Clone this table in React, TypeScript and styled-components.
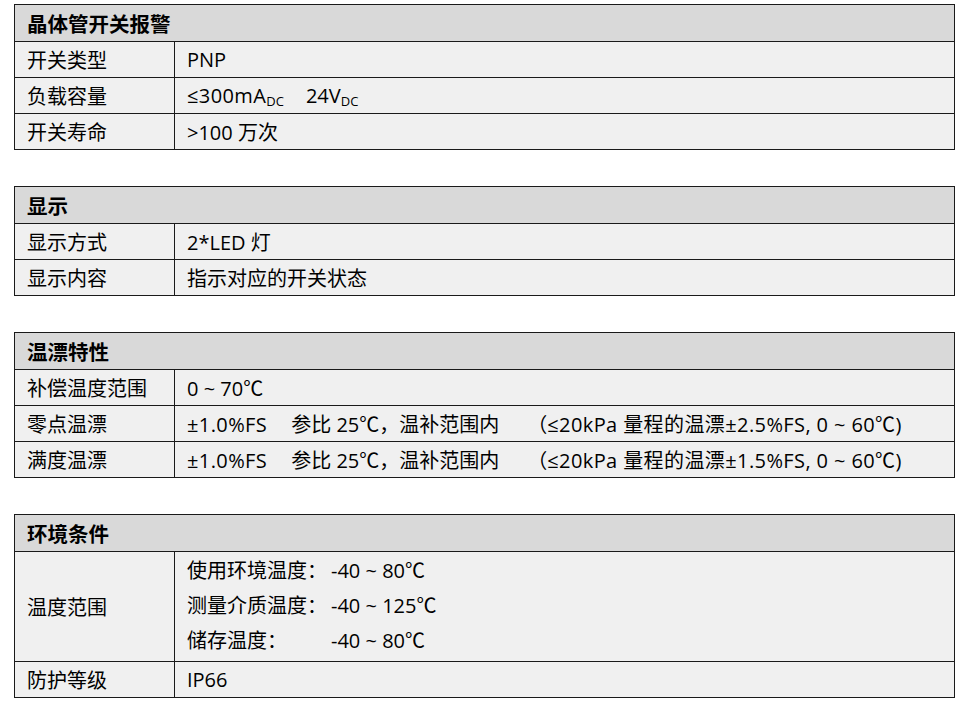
import React from "react";
import styled, { createGlobalStyle } from "styled-components";

const GlobalStyles = createGlobalStyle`
    body {
        margin: 0;
        background: #fff;
        font-family: "Open Sans", "Noto Sans CJK SC", sans-serif;
        color: #000;
    }
`;

const Page = styled.div`
    display: flex;
    flex-direction: column;
    gap: 36px;
    padding: 4px 15px 0 14px;
`;

const Table = styled.table`
    width: 941px;
    border-collapse: collapse;
    table-layout: fixed;
    font-size: 20px;
`;

const LabelCol = styled.col`
    width: 160px;
`;

const HeadCell = styled.th`
    background: #d9d9d9;
    border: 1px solid #1a1a1a;
    height: 36px;
    padding: 0 12px;
    text-align: left;
    font-weight: 700;
    font-size: 20.5px;
`;

const LabelCell = styled.td`
    background: #f0f0f0;
    border: 1px solid #1a1a1a;
    height: 35px;
    padding: 0 12px;
    white-space: nowrap;
`;

const ValueCell = styled.td<{ $tall?: boolean }>`
    background: #f0f0f0;
    border: 1px solid #1a1a1a;
    height: 35px;
    padding: ${(p) => (p.$tall ? "0 12px 4px" : "0 12px")};
    white-space: nowrap;
`;

const Sub = styled.sub`
    font-size: 13px;
    vertical-align: -3px;
`;

const Gap = styled.span<{ $w: number }>`
    display: inline-block;
    width: ${(p) => p.$w}px;
`;

const Wide = styled.span`
    letter-spacing: 0.4px;
`;

const Lines = styled.div`
    display: grid;
    grid-template-columns: auto auto;
    column-gap: 4px;
    justify-content: start;
    grid-auto-rows: 35px;
    align-items: center;
`;

type Row = { label: string; value: React.ReactNode };

const Spec: React.FC<{ title: string; rows: Row[]; children?: React.ReactNode }> = ({ title, rows, children }) => (
    <Table>
        <colgroup>
            <LabelCol />
            <col />
        </colgroup>
        <thead>
            <tr>
                <HeadCell colSpan={2}>{title}</HeadCell>
            </tr>
        </thead>
        <tbody>
            {children}
            {rows.map((r) => (
                <tr key={r.label}>
                    <LabelCell>{r.label}</LabelCell>
                    <ValueCell>{r.value}</ValueCell>
                </tr>
            ))}
        </tbody>
    </Table>
);

const drift = (v: string) => (
    <>
        <Wide>±1.0%FS</Wide>
        <Gap $w={24} />参比 25℃，温补范围内<Gap $w={28} />（<Wide>≤20kPa 量程的温漂±{v}%FS, 0 ~ 60℃)</Wide>
    </>
);

const App: React.FC = () => (
    <>
        <GlobalStyles />
        <Page>
            <Spec
                title="晶体管开关报警"
                rows={[
                    { label: "开关类型", value: "PNP" },
                    {
                        label: "负载容量",
                        value: (
                            <>
                                <Wide>≤300mA</Wide>
                                <Sub>DC</Sub>
                                <Gap $w={22} />
                                24V<Sub>DC</Sub>
                            </>
                        ),
                    },
                    { label: "开关寿命", value: ">100 万次" },
                ]}
            />
            <Spec
                title="显示"
                rows={[
                    { label: "显示方式", value: "2*LED 灯" },
                    { label: "显示内容", value: "指示对应的开关状态" },
                ]}
            />
            <Spec
                title="温漂特性"
                rows={[
                    { label: "补偿温度范围", value: "0 ~ 70℃" },
                    { label: "零点温漂", value: drift("2.5") },
                    { label: "满度温漂", value: drift("1.5") },
                ]}
            />
            <Spec title="环境条件" rows={[{ label: "防护等级", value: "IP66" }]}>
                <tr>
                    <LabelCell>温度范围</LabelCell>
                    <ValueCell $tall>
                        <Lines>
                            <span>使用环境温度：</span>
                            <span>-40 ~ 80℃</span>
                            <span>测量介质温度：</span>
                            <span>-40 ~ 125℃</span>
                            <span>储存温度：</span>
                            <span>-40 ~ 80℃</span>
                        </Lines>
                    </ValueCell>
                </tr>
            </Spec>
        </Page>
    </>
);

export default App;
